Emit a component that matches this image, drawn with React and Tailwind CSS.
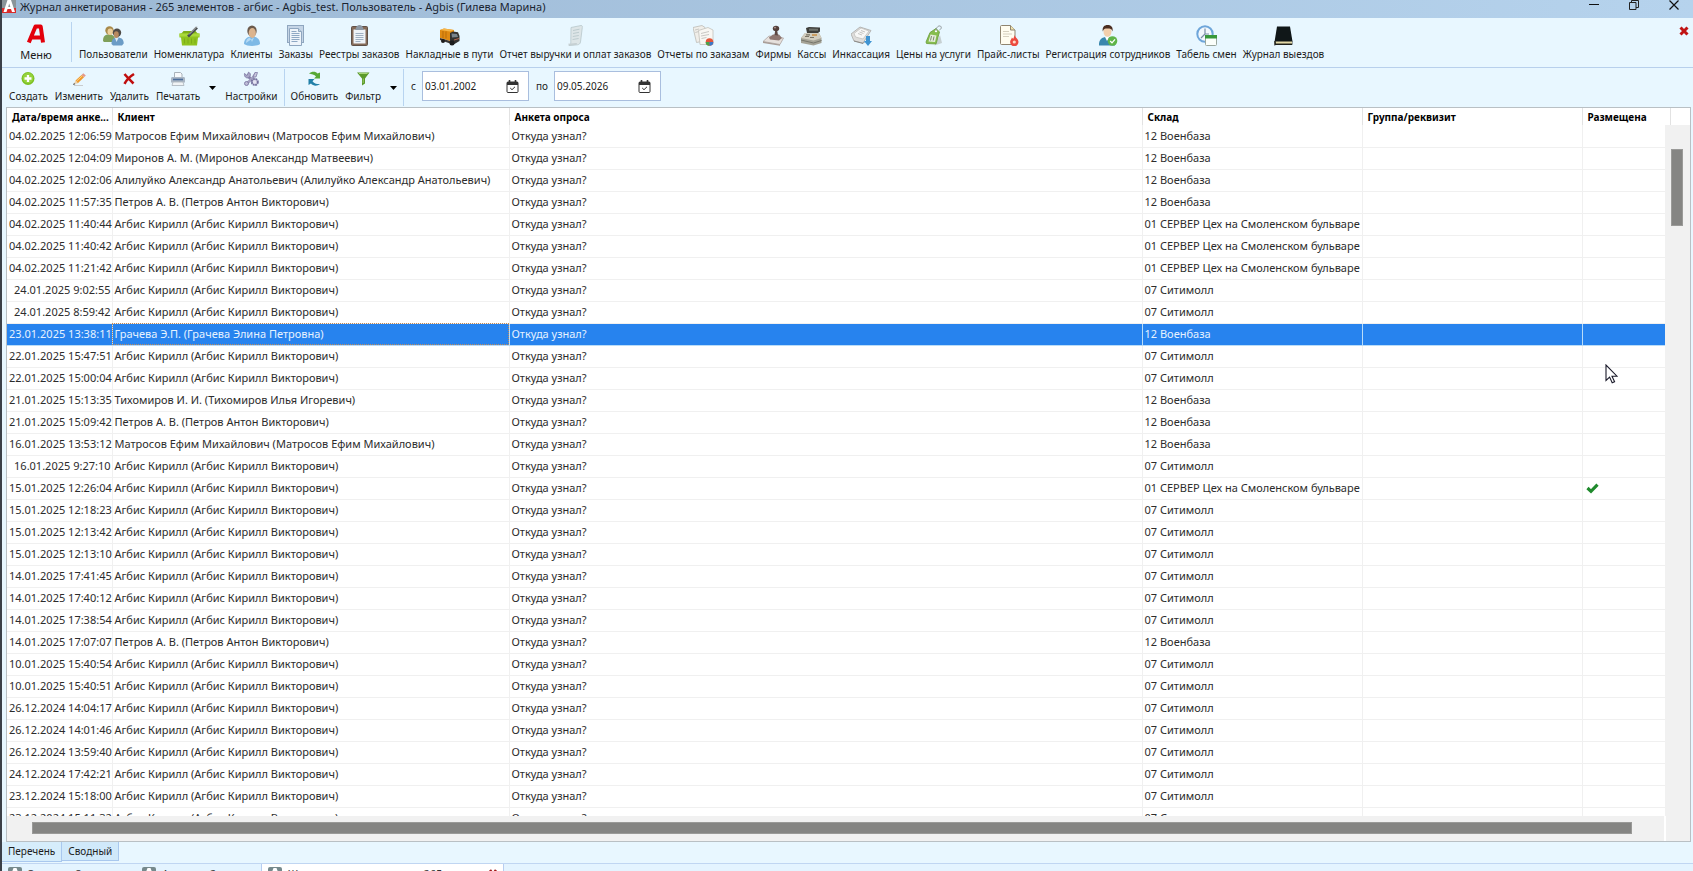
import { useState } from "react";

const AGBIS = "Агбис Кирилл (Агбис Кирилл Викторович)";
const MATROSOV = "Матросов Ефим Михайлович (Матросов Ефим Михайлович)";
const PETROV = "Петров А. В. (Петров Антон Викторович)";
const VOEN = "12 Военбаза";
const CITY = "07 Ситимолл";
const SERVER = "01 СЕРВЕР Цех на Смоленском бульваре";

const ROWS = [
  ["04.02.2025 12:06:59", MATROSOV, VOEN],
  ["04.02.2025 12:04:09", "Миронов А. М. (Миронов Александр Матвеевич)", VOEN],
  ["04.02.2025 12:02:06", "Алилуйко Александр Анатольевич (Алилуйко Александр Анатольевич)", VOEN],
  ["04.02.2025 11:57:35", PETROV, VOEN],
  ["04.02.2025 11:40:44", AGBIS, SERVER],
  ["04.02.2025 11:40:42", AGBIS, SERVER],
  ["04.02.2025 11:21:42", AGBIS, SERVER],
  ["24.01.2025 9:02:55", AGBIS, CITY],
  ["24.01.2025 8:59:42", AGBIS, CITY],
  ["23.01.2025 13:38:11", "Грачева Э.П. (Грачева Элина Петровна)", VOEN],
  ["22.01.2025 15:47:51", AGBIS, CITY],
  ["22.01.2025 15:00:04", AGBIS, CITY],
  ["21.01.2025 15:13:35", "Тихомиров И. И. (Тихомиров Илья Игоревич)", VOEN],
  ["21.01.2025 15:09:42", PETROV, VOEN],
  ["16.01.2025 13:53:12", MATROSOV, VOEN],
  ["16.01.2025 9:27:10", AGBIS, CITY],
  ["15.01.2025 12:26:04", AGBIS, SERVER, true],
  ["15.01.2025 12:18:23", AGBIS, CITY],
  ["15.01.2025 12:13:42", AGBIS, CITY],
  ["15.01.2025 12:13:10", AGBIS, CITY],
  ["14.01.2025 17:41:45", AGBIS, CITY],
  ["14.01.2025 17:40:12", AGBIS, CITY],
  ["14.01.2025 17:38:54", AGBIS, CITY],
  ["14.01.2025 17:07:07", PETROV, VOEN],
  ["10.01.2025 15:40:54", AGBIS, CITY],
  ["10.01.2025 15:40:51", AGBIS, CITY],
  ["26.12.2024 14:04:17", AGBIS, CITY],
  ["26.12.2024 14:01:46", AGBIS, CITY],
  ["26.12.2024 13:59:40", AGBIS, CITY],
  ["24.12.2024 17:42:21", AGBIS, CITY],
  ["23.12.2024 15:18:00", AGBIS, CITY],
  ["23.12.2024 15:11:32", AGBIS, CITY],
];

const MAIN_BUTTONS = [
  ["Пользователи", UsersIcon],
  ["Номенклатура", BasketIcon],
  ["Клиенты", ClientIcon],
  ["Заказы", OrdersIcon],
  ["Реестры заказов", ClipboardIcon],
  ["Накладные в пути", TruckIcon],
  ["Отчет выручки и оплат заказов", ScrollIcon],
  ["Отчеты по заказам", ReportsIcon],
  ["Фирмы", StampIcon],
  ["Кассы", CashIcon],
  ["Инкассация", CollectIcon],
  ["Цены на услуги", TagIcon],
  ["Прайс-листы", PriceIcon],
  ["Регистрация сотрудников", StaffIcon],
  ["Табель смен", ShiftIcon],
  ["Журнал выездов", BookIcon],
];

export default function App() {
  const [selected, setSelected] = useState(9);
  const [from, setFrom] = useState("03.01.2002");
  const [to, setTo] = useState("09.05.2026");

  return (
    <div className="relative flex h-screen flex-col overflow-hidden border-l-2 border-[#3b4048] bg-[#e8f7ff] font-['Noto_Sans','Open_Sans',sans-serif] text-[10px] text-[#1c1c1c]">
      <TitleBar />

      <div className="flex h-[50px] shrink-0 border-b border-[#b8d0ec]">
        <button className="flex w-[68px] flex-col items-center pt-[5px]">
          <MenuIcon />
          <span className="text-[11px] leading-4">Меню</span>
        </button>
        <div className="mt-1 mr-1 ml-px h-10 w-px bg-[#b8d4f0]" />
        <div className="flex min-w-0 flex-1">
          {MAIN_BUTTONS.map(([label, Icon]) => (
            <button key={label} className="flex flex-col items-center px-[3px] pt-[7px] whitespace-nowrap">
              <Icon />
              <span className="leading-4">{label}</span>
            </button>
          ))}
        </div>
        <button aria-label="Закрыть журнал" className="mt-2 mr-1 self-start">
          <svg width="10" height="10" viewBox="0 0 10 10">
            <path d="M1.5 1.5 8.5 8.5M8.5 1.5 1.5 8.5" stroke="#c01414" strokeWidth="3" />
          </svg>
        </button>
      </div>

      <div className="flex h-[39px] shrink-0 gap-px pl-1">
        <ToolButton label="Создать" icon={<CreateIcon />} />
        <ToolButton label="Изменить" icon={<PencilIcon />} />
        <ToolButton label="Удалить" icon={<DeleteIcon />} />
        <ToolButton label="Печатать" icon={<PrinterIcon />} />
        <DropArrow label="Варианты печати" />
        <ToolButton label="Настройки" icon={<SettingsIcon />} />
        <div className="mx-[2px] my-px w-px bg-[#b8d4f0]" />
        <ToolButton label="Обновить" icon={<RefreshIcon />} />
        <ToolButton label="Фильтр" icon={<FilterIcon />} />
        <DropArrow label="Варианты фильтра" />
        <div className="my-px w-px bg-[#b8d4f0]" />
        <DateField id="from" label="с" value={from} onChange={setFrom} />
        <DateField id="to" label="по" value={to} onChange={setTo} />
      </div>

      <div className="mr-[2px] ml-1 flex min-h-0 flex-1 flex-col border border-[#b9c0c4] bg-white">
        <div className="relative min-h-0 flex-1 overflow-hidden">
          <table className="w-full table-fixed border-collapse text-left text-[11px]">
            <colgroup>
              <col className="w-[105px]" />
              <col className="w-[397px]" />
              <col />
              <col className="w-[220px]" />
              <col className="w-[220px]" />
              <col className="w-[88px]" />
              <col className="w-[20px]" />
            </colgroup>
            <thead>
              <tr className="h-[17px] text-[10px] text-black">
                {["Дата/время анке...", "Клиент", "Анкета опроса", "Склад", "Группа/реквизит", "Размещена"].map((h) => (
                  <th key={h} className="border-r border-[#e2e2e2] p-0 pl-[5px] leading-4 font-bold whitespace-nowrap">
                    {h}
                  </th>
                ))}
                <th className="p-0" />
              </tr>
            </thead>
            <tbody>
              {ROWS.map((row, i) => (
                <Row key={row[0]} row={row} active={i === selected} onSelect={() => setSelected(i)} />
              ))}
            </tbody>
          </table>

          {/* vertical scrollbar, starts under the header */}
          <div className="absolute top-[17px] right-0 bottom-0 w-[25px] bg-[#f1f1f1]">
            <div className="mt-6 ml-1.5 h-[77px] w-3 border border-[#9a9a98] bg-[#858583]" />
          </div>
        </div>
        <div className="flex h-[25px] shrink-0">
          <div className="flex-1 bg-[#f1f1f1] pt-[6px] pr-8 pl-[25px]">
            <div className="h-3 border border-[#9a9a98] bg-[#858583]" />
          </div>
          <div className="ml-[2px] h-full w-6 bg-[#f1f1f1]" />
        </div>
      </div>

      <div className="flex h-[21px] shrink-0">
        <button className="h-5 border-r border-b border-[#a9c8ee] bg-[#d6edfb] px-1.5">
          Перечень
        </button>
        <button className="h-[19px] border-r border-b border-[#a9c8ee] bg-[#d0e9fa] px-1.5">
          Сводный
        </button>
      </div>

      {/* open windows, cut off by the lower edge of the screen */}
      <div className="h-2 shrink-0 overflow-hidden border-t border-[#c0d6f2] bg-[#e4f4ff]">
        <div className="flex h-[20px] text-[11px]">
          <WindowTab title="Заказы - 8" className="w-[134px] pl-1.5" />
          <WindowTab title="Анкеты - 2" className="w-[125px] pl-1.5" />
          <WindowTab title="Журнал анкетирования - 265" className="w-[243px] border-x border-[#b8cdf0] bg-white pl-1.5" closable />
        </div>
      </div>

      {/* mouse pointer */}
      <svg className="pointer-events-none absolute top-[364px] left-[1603px]" width="13" height="20" viewBox="0 0 13 20">
        <path d="M1 1v15.5l3.6-3.4 2.6 5.7 2.4-1.1-2.6-5.5H12z" fill="#fff" stroke="#1a1a2a" strokeWidth="1.1" />
      </svg>
    </div>
  );
}

/* ---------- Parts ---------- */

function TitleBar() {
  return (
    <div className="flex h-[18px] shrink-0 items-start bg-linear-to-r from-[#9cb8d4] to-[#b6d3ed]">
      <svg width="15" height="13" viewBox="0 0 15 13" className="shrink-0">
        <path d="M0 0h14v13H0z" fill="#8a9499" />
        <path d="M0 8h14v5H0z" fill="#d92a2a" />
        <path d="M5.5 0h3.5l4 12h-3l-1-3H5.500l-1 3H1.500z" fill="#fff" />
        <path d="M7.200 3.500 8.300 7H6.200z" fill="#8a9499" />
      </svg>
      <div className="ml-[3px] flex-1 text-[11px] leading-[14px] whitespace-nowrap text-[#1a2430]">
        Журнал анкетирования - 265 элементов - агбис - Agbis_test. Пользователь - Agbis (Гилева Марина)
      </div>
      <div className="flex h-[10px] items-center gap-[30px] pr-[14px]">
        <button aria-label="Свернуть">
          <svg width="10" height="10" viewBox="0 0 10 10"><path d="M0 4.500h10" stroke="#111" /></svg>
        </button>
        <button aria-label="Развернуть">
          <svg width="10" height="10" viewBox="0 0 10 10" fill="none" stroke="#222">
            <path d="M.5 2.500h6.500v7H.5zM2.500 2.500v-2h7v7H7" />
          </svg>
        </button>
        <button aria-label="Закрыть">
          <svg width="10" height="10" viewBox="0 0 10 10"><path d="M.5.5l9 9M9.500.5l-9 9" stroke="#111" strokeWidth="1.2" /></svg>
        </button>
      </div>
    </div>
  );
}

function ToolButton({ label, icon }) {
  return (
    <button className="flex flex-col items-center px-[3px] pt-[3px] whitespace-nowrap">
      {icon}
      <span className="leading-4">{label}</span>
    </button>
  );
}

function DropArrow({ label }) {
  return (
    <button aria-label={label} className="flex w-[17px] items-center justify-center">
      <svg width="7" height="4" viewBox="0 0 7 4"><path d="M0 0h7L3.500 4z" fill="#000" /></svg>
    </button>
  );
}

function DateField({ id, label, value, onChange }) {
  return (
    <div className="flex items-start pt-[3px]">
      <label htmlFor={id} className="px-1.5 leading-[30px]">{label}</label>
      <div className="flex h-[30px] w-[107px] items-center border border-[#a9bede] bg-white pr-[9px] pl-[2px]">
        <input
          id={id}
          value={value}
          onChange={(e) => onChange(e.target.value)}
          className="min-w-0 flex-1 bg-transparent outline-none"
        />
        <svg width="13" height="13" viewBox="0 0 13 13" fill="none" stroke="#333">
          <rect x="1" y="2" width="11" height="10.500" rx="1" />
          <path d="M1 3.500h11" strokeWidth="3" />
          <path d="M3.500 0v3M9.500 0v3" strokeWidth="1.600" />
          <path d="m4.200 8 1.800 1.700L9 6.800" />
        </svg>
      </div>
    </div>
  );
}

function Row({ row, active, onSelect }) {
  const [date, client, store, placed] = row;
  const cell = "overflow-hidden border-r border-b p-0 pl-[2px] leading-4 whitespace-nowrap ";
  const line = active ? "border-[#b9dcf8]" : "border-[#f0f0f0]";

  return (
    <tr onClick={onSelect} className={"h-[22px] " + (active ? "bg-[#2783ee] text-[#e6f2ff]" : "text-[#2c2c2c]")}>
      <td className={cell + line + " pr-px text-right"}>{date}</td>
      <td className={cell + line + (active ? " outline outline-dotted -outline-offset-1 outline-[#c08a5a]" : "")}>{client}</td>
      <td className={cell + line}>Откуда узнал?</td>
      <td className={cell + line}>{store}</td>
      <td className={cell + line} />
      <td className={"border-b p-0 pl-[3px] " + line}>
        {placed && (
          <svg width="13" height="12" viewBox="0 0 13 12" role="img" aria-label="Размещена">
            <path d="M1.500 6 5 9.300 11.500 2.700" fill="none" stroke="#1f8a2c" strokeWidth="3.200" />
          </svg>
        )}
      </td>
      <td className={"border-b p-0 " + line} />
    </tr>
  );
}

function WindowTab({ title, className, closable }) {
  return (
    <div className={"flex shrink-0 items-center gap-1.5 " + className}>
      <svg width="14" height="14" viewBox="0 0 14 14">
        <rect width="14" height="14" rx="2" fill="#76898c" />
        <path d="M5.500 1h3L13 13h-3L7 5l-3 8H1z" fill="#fff" />
      </svg>
      <span className="flex-1 text-[#333]">{title}</span>
      {closable && (
        <button aria-label="Закрыть вкладку" className="mr-1.5">
          <svg width="8" height="10" viewBox="0 0 8 10"><path d="M1 1l6 8M7 1l-6 8" stroke="#a01818" strokeWidth="2.500" /></svg>
        </button>
      )}
    </div>
  );
}

/* ---------- Icons ---------- */

function Svg21({ children }) {
  return <svg width="21" height="21" viewBox="0 0 21 21" className="shrink-0">{children}</svg>;
}

function Svg16({ children }) {
  return <svg width="16" height="16" viewBox="0 0 16 16" className="mb-px shrink-0">{children}</svg>;
}

function MenuIcon() {
  return (
    <svg width="20" height="24" viewBox="0 0 20 24" className="shrink-0">
      <path d="M2.800 19.500 9.500 3.500h5.200L17 19.500M6 14.500h10" fill="none" stroke="#e3000b" strokeWidth="4" strokeLinejoin="round" />
    </svg>
  );
}

function UsersIcon() {
  return (
    <Svg21>
      <path d="M0 16c0-5 2-6.500 6-6.500s6 2 6 5l-2 2.500H1z" fill="#7fa05a" />
      <circle cx="6.500" cy="5.500" r="4.200" fill="#a8894a" />
      <ellipse cx="7.200" cy="6.800" rx="2.700" ry="3.300" fill="#ecd09c" />
      <path d="M8.500 19c0-5 2-6.500 6-6.500s6.200 2 6.200 6L19 20.500H10z" fill="#6c9cc6" />
      <circle cx="14" cy="7.800" r="4.200" fill="#4f4a46" />
      <ellipse cx="13.300" cy="9.600" rx="2.500" ry="3.400" fill="#b98a60" />
      <path d="m12 13 1.500 4 2-4z" fill="#dceaf5" />
    </Svg21>
  );
}

function BasketIcon() {
  return (
    <Svg21>
      <path d="M2 9 4.500 6h12L19 9z" fill="#7fae18" />
      <path d="M.5 8.500h20v4h-1.500l-1 8H3l-1-8H.5z" fill="#8fc31f" />
      <path d="M.5 8.500h20v3H.5z" fill="#a9d93a" />
      <path d="M5.500 13.500v5M9 13.500v5M12.500 13.500v5M16 13.500v5" stroke="#7dac18" />
      <path d="m9 11.500 9-9" stroke="#4b4f50" strokeWidth="2.600" />
      <path d="m10 9.500 8-8" stroke="#c9cdcd" strokeWidth=".9" />
    </Svg21>
  );
}

function ClientIcon() {
  return (
    <Svg21>
      <path d="M3 19c0-5 3-7.500 8-7.500s8 2.500 8 7.500c-3 2.500-13 2.500-16 0z" fill="#7db9e6" />
      <path d="M5 18c0-3 1.500-5 4-5.500L11 17l2-4.500" fill="#b5daf4" />
      <ellipse cx="11" cy="6" rx="4.700" ry="5.500" fill="#6b5a4c" />
      <ellipse cx="11.300" cy="8" rx="3.600" ry="5" fill="#dbb48e" />
    </Svg21>
  );
}

function OrdersIcon() {
  return (
    <Svg21>
      <rect x="2.500" y=".5" width="16" height="17" fill="#c5d5e6" stroke="#8fa6bf" />
      <path d="M4.500 3.500h9l3 3v14h-12z" fill="#eef4fa" stroke="#8fa6bf" />
      <path d="M13.500 3.500v3h3" fill="#c2d3e4" stroke="#8fa6bf" />
      <path d="M6.500 8.500h8M6.500 10.500h8M6.500 12.500h8M6.500 14.500h8M6.500 16.500h6M6.500 6.500h5" stroke="#8ea8c4" />
    </Svg21>
  );
}

function ClipboardIcon() {
  return (
    <Svg21>
      <rect x="2.500" y="1.500" width="16" height="19" rx="1" fill="#856b58" stroke="#5f5048" />
      <path d="M4.500 4.500h12v14h-12z" fill="#eef3f8" />
      <path d="M7 3c0-1.500 1.500-3 3.500-3S14 1.500 14 3l1 2H6z" fill="#8d98a4" />
      <path d="M6.500 8.500h8M6.500 10.500h8M6.500 12.500h8M6.500 14.500h8M6.500 16.500h5" stroke="#9fb0c2" />
    </Svg21>
  );
}

function TruckIcon() {
  return (
    <Svg21>
      <path d="M1 5 5 3.500 15 5v9l-4 2L1 13z" fill="#e08a12" />
      <path d="M1 5 5 3.500 15 5l-4 1.500z" fill="#f6b64a" />
      <path d="M4 6v7M7 6.500v7" stroke="#b96c08" />
      <path d="M11 8 14 6.500l5 .8L20.500 11v5l-5 3H11z" fill="#33312f" />
      <path d="m12.500 8.500 5.500.5 1 3-6 .5z" fill="#78838c" />
      <path d="m1 13 10 3v2.500L1 15z" fill="#3a3634" />
      <circle cx="4" cy="16" r="2" fill="#1d1d1d" />
      <circle cx="13" cy="18" r="2.500" fill="#1d1d1d" />
      <path d="m15 15 5-1.500" stroke="#b5654c" />
    </Svg21>
  );
}

function ScrollIcon() {
  return (
    <Svg21>
      <path d="m6 2.500 10-2c1.500 0 1.500 1 1.300 2L15.500 17c-.5 2-1.500 2.500-3 2.800L4 20.500c2-1 1.800-2 1.800-4z" fill="#dde5e7" stroke="#b8c6ca" strokeWidth=".8" />
      <path d="m8 5.500 6.500-1.300M8 8.500 14 7.300M7.800 11.500l6-1M7.600 14.500l6-1" stroke="#bccbce" />
      <path d="M3.500 18.500c2 .5 6-.5 8.500-.5 0 1.500-1 2-2 2l-6.500.8z" fill="#c6d0d3" />
    </Svg21>
  );
}

function ReportsIcon() {
  return (
    <Svg21>
      <path d="m0 2.500 9-2 3 2 1 13-9.500 2z" fill="#f0eee9" stroke="#bdbbb5" strokeWidth=".8" />
      <path d="M5.500 5.500 15 2.500 20 5v14.500H7z" fill="#f8f7f3" stroke="#c2c0ba" strokeWidth=".8" />
      <path d="m2 5 4-1M2.300 7.500l3.500-1M8 8.500l8-2M8 11l8-1.500M8.500 13.500l5-1" stroke="#c9c8c4" />
      <circle cx="16.500" cy="17" r="3.800" fill="#e2563a" />
      <path d="M16.500 17v3.800a3.800 3.800 0 0 1-3.800-3.800z" fill="#4aa34b" />
      <path d="M16.500 17h3.800a3.800 3.800 0 0 1-3.800 3.800z" fill="#3c78c8" />
    </Svg21>
  );
}

function StampIcon() {
  return (
    <Svg21>
      <path d="M0 16.500 6 11l14.500 2-3.500 6.500z" fill="#e6e0dc" stroke="#aea6a2" strokeWidth=".8" />
      <path d="m0 16.500 17 3v1.300L0 18z" fill="#a99d97" />
      <path d="m6 12.500 4-3h6l3 3.500-3 2.500-9-1z" fill="#8e7670" />
      <path d="m11.500 10 .7-4.500h2l.8 5z" fill="#5d4843" />
      <ellipse cx="13" cy="3.500" rx="3.200" ry="2.800" fill="#54403c" />
      <ellipse cx="12" cy="2.600" rx="1.200" ry=".9" fill="#a58c86" />
    </Svg21>
  );
}

function CashIcon() {
  return (
    <Svg21>
      <path d="M0 13 4 8h14l2.500 5v5l-8 2.500L0 18z" fill="#a5a397" />
      <path d="m0 13 4-5h14l2.500 5-8 2.500z" fill="#d2cdbf" />
      <path d="m5 3 3-1 11 .5v4L17 8H6z" fill="#3d3d3a" />
      <path d="m8 3.500 9 .3v2H8z" fill="#6f726c" />
      <path d="M4 11.500h4M5 9.800h4M9 12.500h4" stroke="#7a7567" strokeWidth="1.200" />
      <path d="M11 10h5" stroke="#c98a3c" strokeWidth="1.400" />
      <path d="m0 15 12.500 3 8-2.500" fill="none" stroke="#76756b" />
    </Svg21>
  );
}

function CollectIcon() {
  return (
    <Svg21>
      <path d="m0 9 9-7 11 3.500-8 12.500-9-2z" fill="#dedddb" stroke="#a9a8a6" strokeWidth=".8" />
      <path d="m3 8.500 7-5.500 8 3-6 8-7.500-2z" fill="#f7f7f6" stroke="#bcbbb9" strokeWidth=".7" />
      <path d="m3 16 9 2.500 2-2" fill="none" stroke="#8c8b88" />
      <path d="m7 8.500 4 1.500M8.500 7l4 1.500M10 5.500l4 1.500" stroke="#c4c4c2" />
      <path d="M15 11h4v5h2l-4 5-4-5h2z" fill="#3f94d2" />
    </Svg21>
  );
}

function TagIcon() {
  return (
    <Svg21>
      <path d="M11.500 20.500 19 18l-2-8z" fill="#c6d0d2" />
      <path d="M7 7.500 13 3.500 16.500 7 13 19l-9.500-.5L3 17z" fill="#86bd4e" stroke="#6a9a3a" strokeWidth=".8" />
      <path d="m7.500 9.500 6 1-1.500 6.500-6.500-.5z" fill="#e4edda" />
      <path d="m8.500 11-1 4.500M11 11.500l-.8 4" stroke="#7d8a70" />
      <circle cx="13" cy="6" r="1.200" fill="#fff" />
      <path d="M13 6c0-3 2-5.500 4-5s1.500 3-.5 4" fill="none" stroke="#8f9799" />
    </Svg21>
  );
}

function PriceIcon() {
  return (
    <Svg21>
      <path d="M2.500 1.500c0-.6.400-1 1-1h9l4.500 4.500v13c0 1-.5 1.500-1.500 1.500h-12c-.6 0-1-.4-1-1z" fill="#fffdf0" stroke="#8f8570" />
      <path d="M12.500.5v4.500H17" fill="#efe3ae" stroke="#8f8570" />
      <path d="M5 6.500h6M5 9h9M5 11.500h6" stroke="#d6d1c0" />
      <path d="M16.500 10c1 3 4 4 4 7a4.200 4.200 0 0 1-8.400 0c0-2 1.400-2.500 1.800-4.500.8.600 1 1 1.200 1.500.6-1.200 1.400-2.500 1.400-4z" fill="#ec4a3f" />
      <circle cx="16.300" cy="17" r="1.600" fill="#ffd8c6" />
    </Svg21>
  );
}

function StaffIcon() {
  return (
    <Svg21>
      <path d="M2 20.500c-.5-6 3-8.500 8-8.500s7.500 2 8 8.500z" fill="#3a87ad" />
      <path d="m8 12 2 4 2.500-4z" fill="#fff" />
      <ellipse cx="10.500" cy="6.500" rx="4" ry="5.300" fill="#f3cfac" />
      <path d="M5.800 6.500C5 2 7.500 0 10.500 0s6 1.500 5 6.500c-1-3-2-3-5-3s-3.800.5-4.700 3z" fill="#4a2d20" />
      <circle cx="15.500" cy="16" r="4.800" fill="#5fb548" />
      <path d="m13.200 16 1.800 1.900 3-3.500" fill="none" stroke="#fff" strokeWidth="1.300" />
    </Svg21>
  );
}

function ShiftIcon() {
  return (
    <Svg21>
      <circle cx="9" cy="9" r="7.700" fill="#f2f8fd" stroke="#6ea6da" strokeWidth="2" />
      <path d="M9 3.500V9h4M9 9 5 13" fill="none" stroke="#7a8fa5" strokeWidth="1.200" />
      <rect x="9.500" y="10.500" width="11" height="10" rx="1" fill="#fbfffb" stroke="#9aa79d" />
      <path d="M9 10h12v3.500H9z" fill="#37983a" />
    </Svg21>
  );
}

function BookIcon() {
  return (
    <Svg21>
      <path d="M4 1.500h13l2.500 15-.5 3.500H2L1.500 17z" fill="#101718" />
      <path d="M2.500 16.500h16.500v2.500H3z" fill="#e3d9a8" />
      <path d="M2 19h17.500M1.800 16v4.500" stroke="#2b2a20" />
    </Svg21>
  );
}

function CreateIcon() {
  return (
    <Svg16>
      <circle cx="8" cy="7.500" r="6.500" fill="#7cc022" />
      <circle cx="8" cy="7" r="5.300" fill="#95d23c" />
      <path d="M8 4v7M4.500 7.500h7" stroke="#fff" strokeWidth="2.300" />
    </Svg16>
  );
}

function PencilIcon() {
  return (
    <Svg16>
      <path d="M3 14.500h9" stroke="#c9ccce" />
      <path d="M4.500 9.500 10.500 4l2.500 2.300-6.200 5.900z" fill="#f09a2e" />
      <path d="m5.500 10.200 6-5.500" stroke="#ffd080" />
      <path d="m10.500 4 1.800-1.700 2.500 2.200L13 6.300z" fill="#e39a8c" />
      <path d="m4.500 9.500-2 4 4.300-1.300z" fill="#ead2ae" />
      <path d="m2 14 1-2 1.300 1.200z" fill="#444" />
    </Svg16>
  );
}

function DeleteIcon() {
  return (
    <Svg16>
      <path d="M3.500 3C6 6 9 9 12.500 12.500M13 3C9 5.500 5.500 9 3.500 12.800" fill="none" stroke="#c00d0d" strokeWidth="2.600" />
    </Svg16>
  );
}

function PrinterIcon() {
  return (
    <Svg16>
      <path d="M4.500 1.500h6l1.500 1.500v4h-7.500z" fill="#f7f9fb" stroke="#a9b2ba" />
      <path d="M2.500 6h11c1 0 1.500.6 1.500 1.500v4H1v-4C1 6.600 1.500 6 2.500 6z" fill="#aab6c4" />
      <path d="M3 8.500h10" stroke="#4c6e9c" strokeWidth="1.600" />
      <path d="M3 11h10l1 3.500H2z" fill="#f0f3f5" stroke="#a9b2ba" strokeWidth=".8" />
    </Svg16>
  );
}

function SettingsIcon() {
  return (
    <Svg16>
      <path d="m5 5 6 6.500" stroke="#8581ab" strokeWidth="2.600" />
      <path d="M1.500 2.500 4 4.500 5.500 1.200C8 2 8 5.500 5.500 6.800 3 7.500 1 5.500 1.500 2.500z" fill="#aaa7c8" stroke="#736f9c" strokeWidth=".8" />
      <path d="m3 13.500 6.500-6.500 3.500-5" stroke="#a3a0c0" strokeWidth="2.600" fill="none" />
      <path d="m10 6 2-4.500h2.500L13 6z" fill="#c8c6dc" stroke="#7773a0" strokeWidth=".7" />
      <circle cx="11.800" cy="11" r="3" fill="#e4e3f2" stroke="#736f9c" strokeWidth="2" strokeDasharray="1.800 .6" />
      <circle cx="3.500" cy="12.500" r="2" fill="#bdbbd6" stroke="#736f9c" strokeWidth=".8" />
    </Svg16>
  );
}

function RefreshIcon() {
  return (
    <Svg16>
      <path d="M3 2.500C6 0 10 .5 11.500 2.500L14 1.500v6H8l2-2C8.500 3.500 5.500 3 3 2.500z" fill="#58a935" />
      <path d="M14 13c-3 2.500-7 2-9-.5L2.500 14V8h6l-2 2.200c1.500 2.300 4.500 3 7.500 2.800z" fill="#2180a8" />
    </Svg16>
  );
}

function FilterIcon() {
  return (
    <Svg16>
      <path d="M2 1.500h12.500L10 7.500v5L7 14.500v-7z" fill="#5b9a2b" />
      <path d="M4 2.500h8.500" stroke="#a8d675" />
      <path d="m8.300 7.500-.1 4.500" stroke="#97c965" />
    </Svg16>
  );
}
